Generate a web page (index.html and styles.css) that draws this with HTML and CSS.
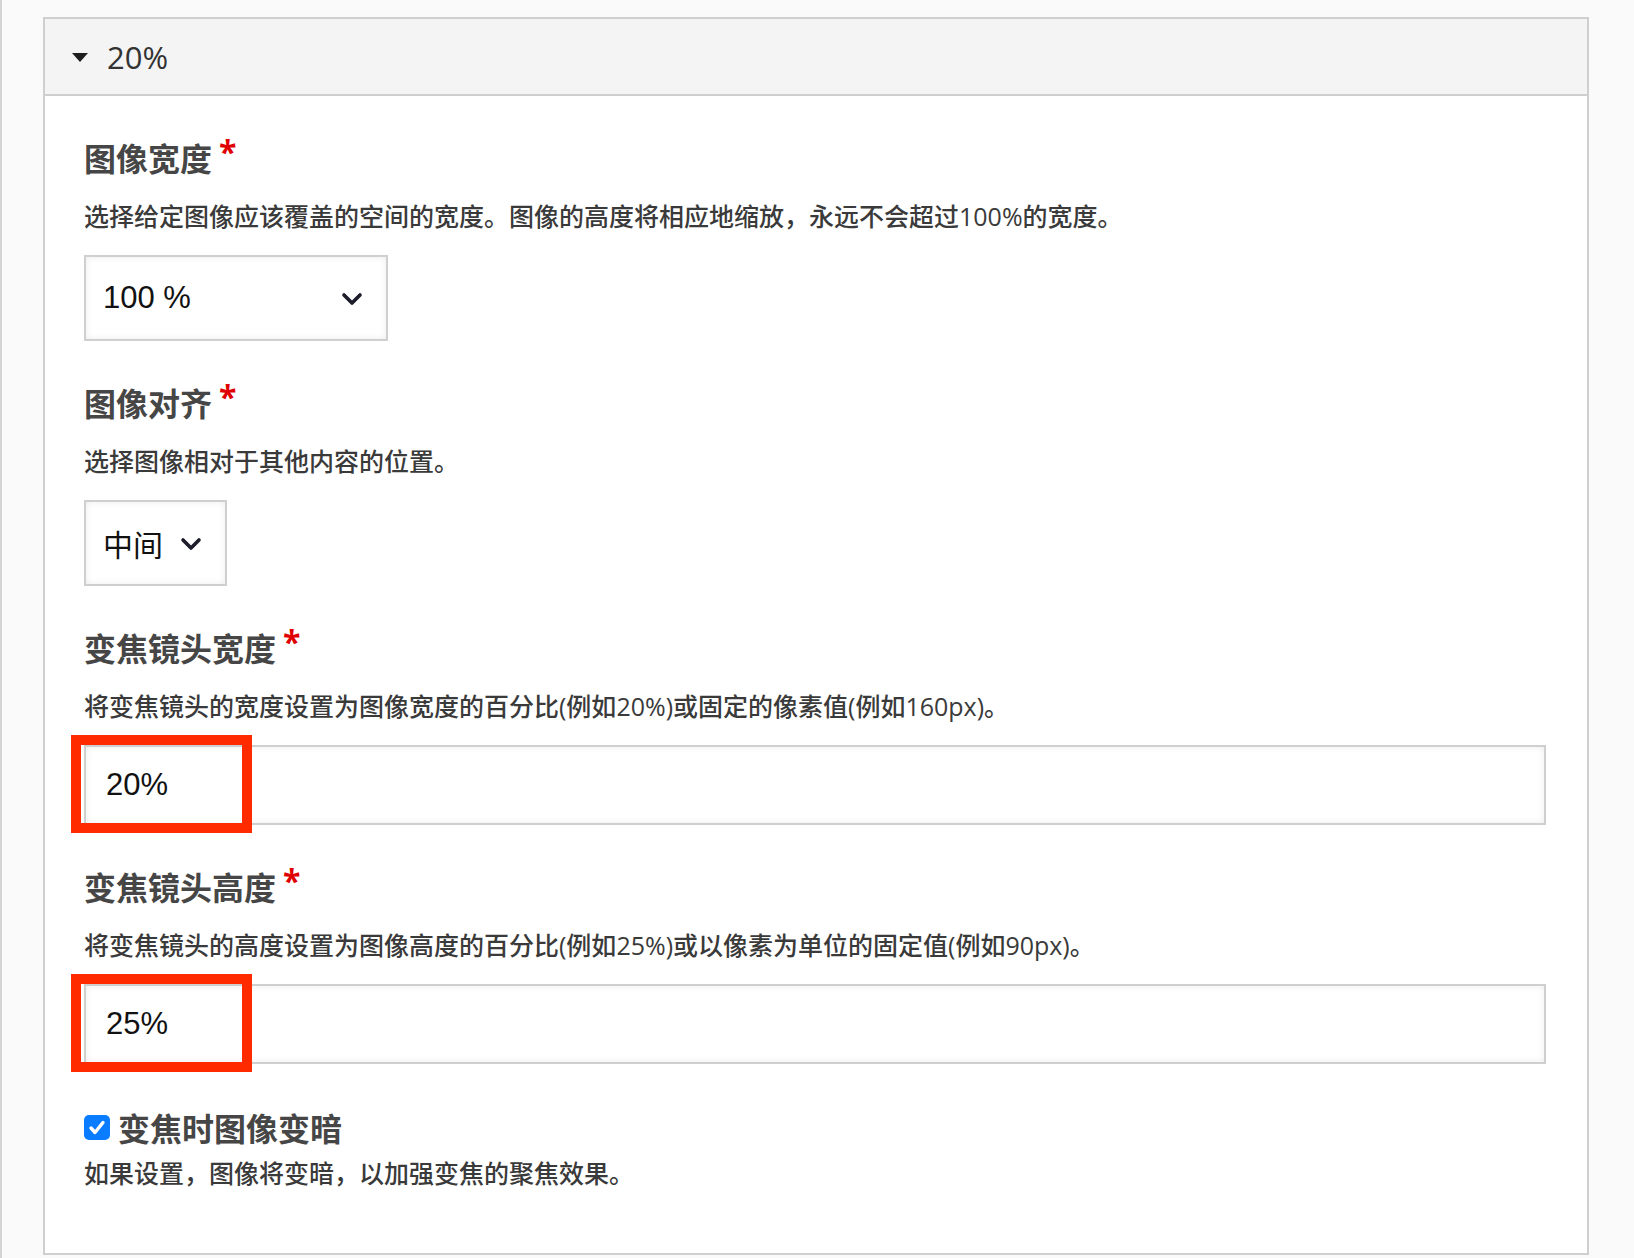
FILE: index.html
```html
<!DOCTYPE html>
<html lang="zh-CN">
<head>
<meta charset="utf-8">
<title>20%</title>
<link rel="stylesheet" href="styles.css">
</head>
<body>
<div class="page">
  <div class="panel">
    <div class="panel-head">
      <span class="caret"></span>
      <span class="head-title">20%</span>
    </div>
    <div class="panel-body">
      <div class="item">
        <div class="label">图像宽度<span class="req">*</span></div>
        <div class="desc">选择给定图像应该覆盖的空间的宽度。图像的高度将相应地缩放，永远不会超过100%的宽度。</div>
        <div class="control select select-wide">
          <span class="select-value">100 %</span>
          <svg class="chev" width="22" height="15" viewBox="0 0 22 15"><path d="M3 3 L11 11 L19 3" fill="none" stroke="#1c1c2a" stroke-width="3.6" stroke-linecap="round" stroke-linejoin="round"/></svg>
        </div>
      </div>
      <div class="item">
        <div class="label">图像对齐<span class="req">*</span></div>
        <div class="desc">选择图像相对于其他内容的位置。</div>
        <div class="control select select-auto">
          <span class="select-value cjk">中间</span>
          <svg class="chev" width="22" height="15" viewBox="0 0 22 15"><path d="M3 3 L11 11 L19 3" fill="none" stroke="#1c1c2a" stroke-width="3.6" stroke-linecap="round" stroke-linejoin="round"/></svg>
        </div>
      </div>
      <div class="item">
        <div class="label">变焦镜头宽度<span class="req">*</span></div>
        <div class="desc">将变焦镜头的宽度设置为图像宽度的百分比(例如20%)或固定的像素值(例如160px)。</div>
        <div class="control field">
          <input class="text-input" type="text" value="20%" readonly>
          <span class="mark"></span>
        </div>
      </div>
      <div class="item">
        <div class="label">变焦镜头高度<span class="req">*</span></div>
        <div class="desc">将变焦镜头的高度设置为图像高度的百分比(例如25%)或以像素为单位的固定值(例如90px)。</div>
        <div class="control field">
          <input class="text-input" type="text" value="25%" readonly>
          <span class="mark"></span>
        </div>
      </div>
      <div class="item check-item">
        <div class="check-row">
          <span class="checkbox">
            <svg width="26" height="25" viewBox="0 0 26 25"><path d="M7 13 L11 17.5 L19 7.5" fill="none" stroke="#fff" stroke-width="3.4" stroke-linecap="round" stroke-linejoin="round"/></svg>
          </span>
          <span class="label">变焦时图像变暗</span>
        </div>
        <div class="desc desc-tight">如果设置，图像将变暗，以加强变焦的聚焦效果。</div>
      </div>
    </div>
  </div>
</div>
</body>
</html>
```
FILE: styles.css
```css
html, body {
  margin: 0;
  padding: 0;
}

body {
  background: #fafafa;
  font-family: "Open Sans", "Noto Sans CJK SC", sans-serif;
  color: #333;
}

.page {
  box-sizing: border-box;
  width: 1625px;
  min-height: 1258px;
  border-left: 2px solid #d4d4d4;
  padding: 17px 0 0 41px;
}

.panel {
  box-sizing: border-box;
  width: 1546px;
  border: 2px solid #cfcfcf;
  background: #fff;
}

.panel-head {
  height: 75px;
  display: flex;
  align-items: center;
  padding-left: 27px;
  background: #f4f4f4;
  border-bottom: 2px solid #cfcfcf;
}

.caret {
  width: 0;
  height: 0;
  border-left: 8px solid transparent;
  border-right: 8px solid transparent;
  border-top: 9px solid #1e1e1e;
  margin-right: 19px;
  margin-top: 2px;
}

.head-title {
  font-size: 31px;
  line-height: 40px;
  color: #333;
}

.panel-body {
  padding: 41px 41px 64px 39px;
}

.item + .item {
  margin-top: 41px;
}

.item + .check-item {
  margin-top: 43px;
}

.label {
  font-size: 32px;
  line-height: 40px;
  height: 40px;
  font-weight: 700;
  color: #464646;
  font-family: "Noto Sans CJK SC", sans-serif;
}

.req {
  font-family: "Open Sans", sans-serif;
  color: #e00000;
  font-weight: 700;
  font-size: 32px;
  line-height: 0;
  margin-left: 7px;
  vertical-align: 7px;
}

.desc {
  margin-top: 23px;
  font-size: 25px;
  line-height: 32px;
  font-weight: 500;
  color: #3a3a3a;
}

.desc-tight {
  margin-top: 10px;
}

.control {
  margin-top: 23px;
}

.select {
  box-sizing: border-box;
  height: 86px;
  display: flex;
  align-items: center;
  border: 2px solid #cfcfcf;
  background: #fff;
  box-shadow: inset 0 0 7px rgba(0, 0, 0, 0.08);
  padding: 0 23px 0 17px;
}

.select-wide {
  width: 304px;
}

.select-auto {
  width: 143px;
}

.select-value {
  font-family: "Liberation Sans", Arial, sans-serif;
  font-size: 31px;
  color: #111;
  flex: 1;
}

.select-value.cjk {
  font-family: "Noto Sans CJK SC", sans-serif;
  font-size: 30px;
}

.chev {
  flex: none;
  margin-top: 2px;
}

.field {
  position: relative;
}

.text-input {
  display: block;
  box-sizing: border-box;
  width: 100%;
  height: 80px;
  margin: 0;
  border: 2px solid #cfcfcf;
  background: #fff;
  box-shadow: inset 0 0 7px rgba(0, 0, 0, 0.08);
  padding: 0 20px;
  font-family: "Liberation Sans", Arial, sans-serif;
  font-size: 31px;
  color: #111;
  outline: none;
}

.mark {
  position: absolute;
  left: -13px;
  top: -10px;
  width: 181px;
  height: 98px;
  box-sizing: border-box;
  border: 10px solid #ff2a00;
  pointer-events: none;
}

.check-row {
  display: flex;
  align-items: center;
}

.checkbox {
  box-sizing: border-box;
  width: 26px;
  height: 25px;
  border-radius: 5px;
  background: #0a7cff;
  margin-right: 8px;
  display: flex;
  align-items: center;
  justify-content: center;
}

.checkbox svg {
  display: block;
}
```
